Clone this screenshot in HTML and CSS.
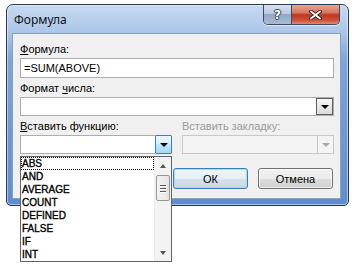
FILE: index.html
```html
<!DOCTYPE html>
<html lang="ru">
<head>
    <meta charset="UTF-8">
    <title>Формула</title>
    <link rel="stylesheet" href="styles.css">
</head>
<body>
    <div class="window">
        <div class="titlebar">
            <span class="title">Формула</span>
            <div class="caption-buttons">
                <span class="cap-btn help">?</span>
                <span class="cap-btn close">
                    <svg width="13" height="10" viewBox="0 0 13 10">
                        <path d="M2 1.5 L11 8.5 M11 1.5 L2 8.5" stroke="#3a2020" stroke-width="3.6" stroke-linecap="square" fill="none"/>
                        <path d="M2 1.5 L11 8.5 M11 1.5 L2 8.5" stroke="#ffffff" stroke-width="1.8" stroke-linecap="square" fill="none"/>
                    </svg>
                </span>
            </div>
        </div>
        <div class="client">
            <label class="lbl first"><u>Ф</u>ормула:</label>
            <div class="edit">=SUM(ABOVE)</div>

            <label class="lbl">Формат <u>ч</u>исла:</label>
            <div class="select"><span class="sel-arrow"><i class="tri"></i></span></div>

            <div class="cols">
                <div class="col">
                    <label class="lbl"><u>В</u>ставить функцию:</label>
                    <div class="combo">
                        <div class="combo-field"></div>
                        <div class="combo-btn hot"><i class="tri"></i></div>
                        <div class="droplist">
                            <ul class="items">
                                <li class="focus">ABS</li>
                                <li>AND</li>
                                <li>AVERAGE</li>
                                <li>COUNT</li>
                                <li>DEFINED</li>
                                <li>FALSE</li>
                                <li>IF</li>
                                <li>INT</li>
                            </ul>
                            <div class="vscroll">
                                <span class="sb-arrow"><i class="tri up"></i></span>
                                <div class="sb-track">
                                    <span class="sb-thumb"><i></i><i></i><i></i></span>
                                </div>
                                <span class="sb-arrow"><i class="tri small"></i></span>
                            </div>
                        </div>
                    </div>
                </div>
                <div class="col">
                    <label class="lbl disabled">Вставить закладку:</label>
                    <div class="combo off">
                        <div class="combo-field"></div>
                        <div class="combo-btn"><i class="tri grey"></i></div>
                    </div>
                </div>
            </div>

            <div class="buttons">
                <button class="btn default">ОК</button>
                <button class="btn">Отмена</button>
            </div>
        </div>
    </div>
</body>
</html>
```

FILE: styles.css
```css
html {
    height: 100%;
}

body {
    min-height: 100%;
    margin: 0;
    padding: 4px 0 0 6px;
    box-sizing: border-box;
    background: #ffffff;
    font-family: "Liberation Sans", Arial, sans-serif;
    font-size: 11px;
    color: #000;
}

.window {
    position: relative;
    box-sizing: border-box;
    width: 343px;
    height: 202px;
    padding: 0 7px 6px 5px;
    border: 1px solid #2a3a52;
    border-radius: 7px 7px 5px 5px;
    background: linear-gradient(to bottom, #c6d9f0 0, #adc7ea 26px, #7fa5da 55px, #5f8dcf 100%);
    box-shadow: inset 0 0 0 1px rgba(255, 255, 255, 0.45);
}

/* title bar */

.titlebar {
    display: flex;
    justify-content: space-between;
    align-items: center;
    height: 28px;
    padding-left: 2px;
}

.title {
    font-family: "Noto Sans", "Open Sans", sans-serif;
    font-size: 12px;
    color: #111;
}

.caption-buttons {
    display: flex;
    align-self: flex-start;
    margin-right: 1px;
    border: 1px solid #3a4b63;
    border-top: none;
    border-radius: 0 0 5px 5px;
    overflow: hidden;
    box-shadow: 0 1px 0 rgba(255, 255, 255, 0.6);
}

.cap-btn {
    display: flex;
    align-items: center;
    justify-content: center;
    height: 19px;
}

.help {
    width: 27px;
    border-right: 1px solid #3a4b63;
    background: linear-gradient(to bottom, #d8e2ef 0, #b9c9de 45%, #93a8c6 50%, #a9bbd5 100%);
    font-family: "DejaVu Sans", sans-serif;
    font-weight: bold;
    font-size: 12px;
    color: #fff;
    text-shadow: 1px 0 0 #34445c, -1px 0 0 #34445c, 0 1px 0 #34445c, 0 -1px 0 #34445c;
}

.close {
    width: 47px;
    background: linear-gradient(to bottom, #eaa493 0, #d67762 40%, #c0361f 52%, #cc5136 80%, #e08a6a 100%);
}

/* client area */

.client {
    box-sizing: border-box;
    height: 166px;
    padding: 9px 6px 0 7px;
    background: #f0f0f0;
    border: 1px solid #8aa1bf;
}

.lbl {
    display: block;
    line-height: 13px;
    margin: 4px 0 2px;
}

.lbl.first {
    margin-top: 0;
}

.lbl.disabled {
    color: #9a9a9a;
}

.edit {
    box-sizing: border-box;
    height: 20px;
    padding: 3px 3px 0;
    background: #fff;
    border: 1px solid #abadb3;
    line-height: 13px;
}

.select {
    box-sizing: border-box;
    display: flex;
    justify-content: flex-end;
    height: 19px;
    background: #fff;
    border: 1px solid #abadb3;
}

.sel-arrow {
    box-sizing: border-box;
    display: flex;
    align-items: center;
    justify-content: center;
    width: 17px;
    height: 17px;
    border: 1px solid #5e5e5e;
    background: linear-gradient(to bottom, #f6f6f6, #dadada);
}

.tri {
    display: block;
    width: 0;
    height: 0;
    border-left: 4px solid transparent;
    border-right: 4px solid transparent;
    border-top: 4px solid #000;
}

.tri.grey {
    border-top-color: #a8a8a8;
}

.tri.up {
    border-top: none;
    border-bottom: 4px solid #555;
}

.tri.small {
    border-top-color: #555;
}

.cols {
    display: grid;
    grid-template-columns: 1fr 1fr;
    gap: 10px;
}

.combo {
    position: relative;
    display: flex;
    height: 19px;
}

.combo-field {
    flex: 1;
    background: #fff;
    border: 1px solid #abadb3;
    border-right: none;
}

.combo-btn {
    box-sizing: border-box;
    display: flex;
    align-items: center;
    justify-content: center;
    width: 17px;
    border: 1px solid #abadb3;
}

.combo-btn.hot {
    border-color: #3c7fb1;
    border-radius: 1px;
    background: linear-gradient(to bottom, #eaf6fd 0, #d9f0fc 45%, #bee6fd 50%, #a7d9f5 100%);
}

.combo.off {
    margin-top: 2px;
}

.combo.off .combo-field,
.combo.off .combo-btn {
    background: #f4f4f4;
    border-color: #c8c8c8;
}

/* open list of the function combo */

.droplist {
    position: absolute;
    top: 21px;
    left: 0;
    z-index: 5;
    display: flex;
    box-sizing: border-box;
    width: 152px;
    height: 106px;
    background: #fff;
    border: 1px solid #646464;
}

.items {
    flex: 1;
    list-style: none;
    margin: 0;
    padding: 0;
    font-size: 10px;
    -webkit-text-stroke: 0.35px #000;
}

.items li {
    box-sizing: border-box;
    height: 13px;
    line-height: 13px;
    padding-left: 1px;
}

.items li.focus {
    outline: 1px dotted #000;
    outline-offset: -1px;
}

.vscroll {
    display: flex;
    flex-direction: column;
    width: 16px;
    background: #f3f3f3;
    border-left: 1px solid #ececec;
}

.sb-arrow {
    display: flex;
    align-items: center;
    justify-content: center;
    height: 17px;
}

.sb-arrow .tri {
    border-left-width: 3px;
    border-right-width: 3px;
}

.sb-track {
    flex: 1;
    padding-top: 1px;
}

.sb-thumb {
    box-sizing: border-box;
    display: flex;
    flex-direction: column;
    align-items: center;
    justify-content: center;
    gap: 2px;
    width: 14px;
    height: 26px;
    margin-left: 1px;
    border: 1px solid #979797;
    border-radius: 2px;
    background: linear-gradient(to right, #f4f4f4, #e2e2e2);
}

.sb-thumb i {
    display: block;
    width: 6px;
    height: 1px;
    background: #5a5a5a;
    box-shadow: 0 1px 0 #fff;
}

/* dialog buttons */

.buttons {
    display: flex;
    justify-content: flex-end;
    gap: 10px;
    margin-top: 14px;
    padding-right: 1px;
}

.btn {
    box-sizing: border-box;
    width: 75px;
    height: 21px;
    padding: 0;
    font-family: "Liberation Sans", Arial, sans-serif;
    font-size: 11px;
    color: #000;
    border: 1px solid #707070;
    border-radius: 3px;
    background: linear-gradient(to bottom, #f2f2f2 0, #ebebeb 50%, #dddddd 51%, #cfcfcf 100%);
    box-shadow: inset 0 0 0 1px rgba(255, 255, 255, 0.7);
}

.btn.default {
    border-color: #3c7fb1;
    box-shadow: inset 0 0 0 1px #9fdcf8;
    background: linear-gradient(to bottom, #f0f6f9 0, #e6eef3 50%, #d6e1e8 51%, #cbd8e1 100%);
}
```
